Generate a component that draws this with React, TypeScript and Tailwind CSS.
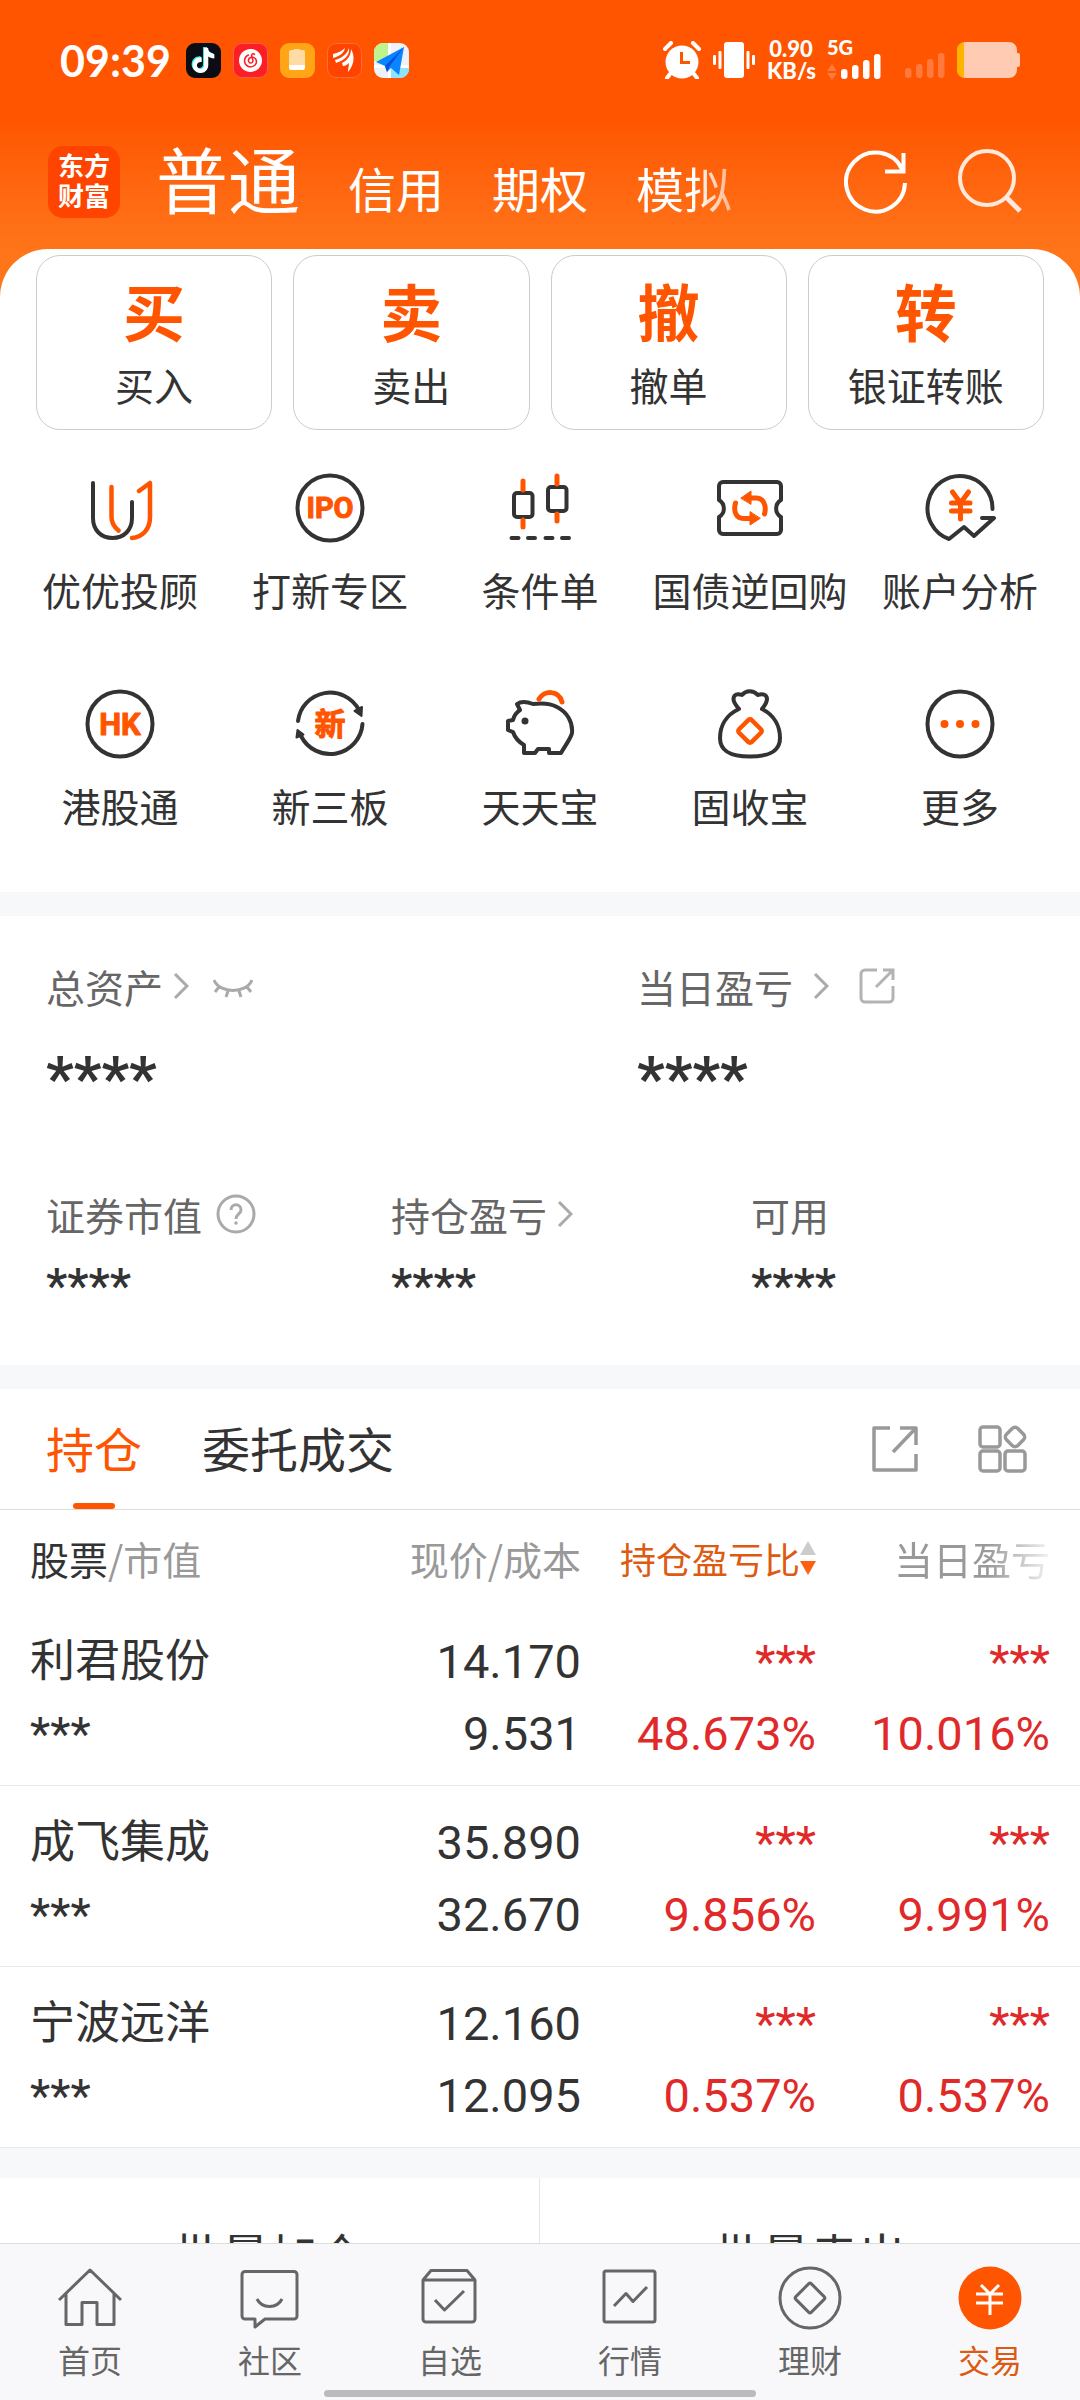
import type { ReactNode } from 'react';
import { SiNeteasecloudmusic, SiTiktok } from 'react-icons/si';

interface Entry {
  label: string;
  icon: ReactNode;
}

interface Holding {
  name: string;
  price: string;
  cost: string;
  totalRate: string;
  dayRate: string;
}

const DARK = '#333333';
const ORANGE = '#ff5500';

const actions = [
  { mark: '买', label: '买入' },
  { mark: '卖', label: '卖出' },
  { mark: '撤', label: '撤单' },
  { mark: '转', label: '银证转账' },
];

const holdings: Holding[] = [
  { name: '利君股份', price: '14.170', cost: '9.531', totalRate: '48.673%', dayRate: '10.016%' },
  { name: '成飞集成', price: '35.890', cost: '32.670', totalRate: '9.856%', dayRate: '9.991%' },
  { name: '宁波远洋', price: '12.160', cost: '12.095', totalRate: '0.537%', dayRate: '0.537%' },
];

function EntryIcon({ children }: { children: ReactNode }) {
  return (
    <svg viewBox="0 0 72 72" className="size-[72px]" fill="none" stroke={DARK} strokeWidth="4" strokeLinecap="round" strokeLinejoin="round" aria-hidden="true">
      {children}
    </svg>
  );
}

const entries: Entry[] = [
  {
    label: '优优投顾',
    icon: (
      <EntryIcon>
        <path d="M9 11v35c0 12 8 20 19.500 20S48 58 48 46V30" />
        <g stroke={ORANGE} strokeWidth="4.500">
          <path d="M27.500 15v30c0 6 2.500 10 7 13.500" />
          <path d="M55 19l11-8v34c0 12-7 20-18 21" />
        </g>
      </EntryIcon>
    ),
  },
  {
    label: '打新专区',
    icon: (
      <EntryIcon>
        <circle cx="36" cy="36" r="32.500" />
        <text x="36" y="46" textAnchor="middle" fontSize="29" stroke={ORANGE} strokeWidth="1" fill={ORANGE} className="font-['Roboto',sans-serif] font-bold">
          IPO
        </text>
      </EntryIcon>
    ),
  },
  {
    label: '条件单',
    icon: (
      <EntryIcon>
        <rect x="10" y="21" width="18.500" height="24" rx="3" />
        <rect x="44" y="15" width="18.500" height="24" rx="3" />
        <path d="M7.500 66h7M24 66h7M41.500 66h7M58 66h7" />
        <path d="M19 9v9M19 48v7M53 4v8M53 42v7" stroke={ORANGE} strokeWidth="5" />
      </EntryIcon>
    ),
  },
  {
    label: '国债逆回购',
    icon: (
      <EntryIcon>
        <path d="M9 10h54a4 4 0 0 1 4 4v14c-6.500 4-6.500 13 0 17v13a4 4 0 0 1-4 4H9a4 4 0 0 1-4-4V45c6.500-4 6.500-13 0-17V14a4 4 0 0 1 4-4z" />
        <g stroke={ORANGE} strokeWidth="5">
          <path d="M37 26h5c7 0 11 7 8.500 16" />
          <path d="M21.500 31c-2.500 9 1 15.500 8 15.500h6" />
        </g>
        <path d="M27 26l10-7v13zM46 46.500L36 53V40z" fill={ORANGE} stroke={ORANGE} strokeWidth="1" />
      </EntryIcon>
    ),
  },
  {
    label: '账户分析',
    icon: (
      <EntryIcon>
        <path d="M68.500 37A32.500 32.500 0 1 0 25 67l15-12 10 9 20-18H58" />
        <path d="M28.500 20l8 11 8-11M27.500 31H46M27.500 39H46M36.500 31v16" stroke={ORANGE} strokeWidth="5" />
      </EntryIcon>
    ),
  },
  {
    label: '港股通',
    icon: (
      <EntryIcon>
        <circle cx="36" cy="36" r="32.500" />
        <text x="36" y="47" textAnchor="middle" fontSize="31" stroke={ORANGE} strokeWidth="1" fill={ORANGE} className="font-['Roboto',sans-serif] font-bold">
          HK
        </text>
      </EntryIcon>
    ),
  },
  {
    label: '新三板',
    icon: (
      <EntryIcon>
        <path d="M4 33A32.500 32.500 0 0 1 65 22M68.500 36A32.500 32.500 0 0 1 7 48" />
        <path d="M60.500 23l7.500-4-.5 9zM3.500 42l6 4.500-7 3z" fill={DARK} strokeWidth="2" />
        <text x="36" y="47" textAnchor="middle" fontSize="31" stroke={ORANGE} strokeWidth="1" fill={ORANGE} className="font-['Noto_Sans_CJK_SC',sans-serif] font-bold">
          新
        </text>
      </EntryIcon>
    ),
  },
  {
    label: '天天宝',
    icon: (
      <EntryIcon>
        <path d="M16 22l-3-6c4-3 11-2 16 0 8-1 17-1 24 3 10 5 16 15 15 26-1 5-7 13-11 20H45v-4H34l-3 4H20v-8c-5-3-9-7-11-13l-5-2v-9l5-1c1-4 4-8 7-10z" />
        <circle cx="21" cy="33" r="3.500" fill={DARK} stroke="none" />
        <path d="M35 11c5-9 20-9 23 3" stroke={ORANGE} strokeWidth="5" />
      </EntryIcon>
    ),
  },
  {
    label: '固收宝',
    icon: (
      <EntryIcon>
        <path d="M25 21C12 27 6 38 6 50c0 13 10 18.500 30 18.500S66 63 66 50c0-12-6-23-18-29 3-4 5-6 5-10 0-4-4-6-9-4-5-5-12-5-16 0-5-2-8.500 0-8.500 4 0 4 2.500 6 5.500 10z" />
        <rect x="27" y="34" width="18" height="18" rx="2.500" transform="rotate(45 36 43)" stroke={ORANGE} strokeWidth="4.500" />
      </EntryIcon>
    ),
  },
  {
    label: '更多',
    icon: (
      <EntryIcon>
        <circle cx="36" cy="36" r="32.500" />
        <g fill={ORANGE} stroke="none">
          <circle cx="20.500" cy="36" r="4" />
          <circle cx="36" cy="36" r="4" />
          <circle cx="51.500" cy="36" r="4" />
        </g>
      </EntryIcon>
    ),
  },
];

function NavIcon({ children }: { children: ReactNode }) {
  return (
    <svg viewBox="0 0 64 64" className="size-16" fill="none" stroke="#666666" strokeWidth="3" strokeLinejoin="round" aria-hidden="true">
      {children}
    </svg>
  );
}

const navItems: Entry[] = [
  {
    label: '首页',
    icon: (
      <NavIcon>
        <path d="M1 34L32 4l31 30M8 28v30.500h16v-22h15v22h17V28" />
      </NavIcon>
    ),
  },
  {
    label: '社区',
    icon: (
      <NavIcon>
        <path d="M7 5.500h49a3 3 0 0 1 3 3V50a3 3 0 0 1-3 3H27l-10 8v-8H7a3 3 0 0 1-3-3V8.500a3 3 0 0 1 3-3z" />
        <path d="M19 33c5 10 20 10 25 0" />
      </NavIcon>
    ),
  },
  {
    label: '自选',
    icon: (
      <NavIcon>
        <path d="M5 14h52v39a3 3 0 0 1-3 3H8a3 3 0 0 1-3-3zl8-9.500h36l8 9.500M17 34l9.500 10L46 25" />
      </NavIcon>
    ),
  },
  {
    label: '行情',
    icon: (
      <NavIcon>
        <rect x="6" y="5" width="51" height="51" rx="2" />
        <path d="M16 40l12-12.500 7 8L49 21" />
      </NavIcon>
    ),
  },
  {
    label: '理财',
    icon: (
      <NavIcon>
        <circle cx="32" cy="32" r="30" />
        <rect x="21" y="21" width="22" height="22" rx="2" transform="rotate(45 32 32)" />
      </NavIcon>
    ),
  },
  {
    label: '交易',
    icon: (
      <NavIcon>
        <circle cx="32" cy="32" r="31.500" fill={ORANGE} stroke="none" />
        <path d="M23 19l9 9 9-9M18 28h27M18 37h27M32 28v21" stroke="#ffffff" />
      </NavIcon>
    ),
  },
];

function Chevron() {
  return (
    <svg viewBox="0 0 16 26" className="h-[26px] w-4" fill="none" stroke="#aaaaaa" strokeWidth="3" aria-hidden="true">
      <path d="M2 1l12 12L2 25" />
    </svg>
  );
}

function SignalBars({ className }: { className?: string }) {
  return (
    <svg viewBox="0 0 40 26" className={`h-[26px] w-10 ${className ?? ''}`} fill="currentColor" aria-hidden="true">
      <rect x="0" y="15" width="6.500" height="10" rx="3" />
      <rect x="11" y="11" width="6.500" height="14" rx="3" />
      <rect x="22" y="6" width="6.500" height="19" rx="3" />
      <rect x="33" y="0" width="6.500" height="25" rx="3" />
    </svg>
  );
}

function StatusBar() {
  return (
    <div className="flex h-[120px] items-center justify-between px-[60px]">
      <div className="flex items-center gap-3">
        <span className="mr-[3px] font-['Lato',sans-serif] text-[43px] leading-none font-bold">09:39</span>
        <span className="flex size-[35px] items-center justify-center rounded-[9px] bg-[#0b0c14]">
          <SiTiktok size={25} className="drop-shadow-[-1px_-1px_0_#25f4ee]" />
        </span>
        <span className="flex size-[35px] items-center justify-center rounded-[9px] border border-[#ff5a50] bg-[#fb1e24]">
          <SiNeteasecloudmusic size={23} />
        </span>
        <span className="flex size-[35px] items-center justify-center rounded-[9px] bg-[#ffa516]">
          <svg viewBox="0 0 16 22" className="h-[22px] w-4" aria-hidden="true">
            <path d="M0 3a2 2 0 0 1 2-2h3V0h6v1h3a2 2 0 0 1 2 2v13H0z" fill="#ffdca6" />
            <path d="M0 16h16v3a2 2 0 0 1-2 2H2a2 2 0 0 1-2-2z" fill="#ffffff" />
          </svg>
        </span>
        <span className="flex size-[35px] items-center justify-center rounded-[9px] border border-[#ff6c3a] bg-[#ff4400]">
          <svg viewBox="0 0 24 24" className="size-6" fill="#ffffff" aria-hidden="true">
            <path d="M1 6C6 5 10 3 13 0c-1 5-5 8-12 10zM3 12C10 10 15 6 17 0c1 7-4 12-13 15zM10 15c6-3 9-8 9-14 5 9 2 17-3 23 0-4 1-6 1-9-2 2-4 3-6 3z" />
          </svg>
        </span>
        <svg viewBox="0 0 35 35" className="size-[35px] rounded-[9px]" aria-hidden="true">
          <rect width="35" height="35" fill="#eef2f6" />
          <path d="M0 0h14v18H0z" fill="#c0f58e" />
          <path d="M17 25h18v10H17z" fill="#8ee4fb" />
          <path d="M14 0h3v35h-3zM0 22h35v3H0z" fill="#ffffff" />
          <path d="M30 4L2 19l9 4 2 6 4-4 8 7z" fill="#0a84ff" />
          <path d="M30 4L11 23l2 6 2-5z" fill="#0552d8" />
        </svg>
      </div>
      <div className="flex items-center gap-3">
        <svg viewBox="0 0 38 38" className="size-[38px]" aria-hidden="true">
          <circle cx="19" cy="21" r="16.500" fill="#ffffff" />
          <path d="M2 8l6-6M36 8l-6-6M7 33l-3 4M31 33l3 4" stroke="#ffffff" strokeWidth="4" strokeLinecap="round" />
          <path d="M18.500 11v10.500H27" fill="none" stroke={ORANGE} strokeWidth="3" />
        </svg>
        <svg viewBox="0 0 42 38" className="h-[38px] w-[42px]" fill="#ffffff" aria-hidden="true">
          <rect x="11" y="1" width="20" height="36" rx="3" />
          <rect x="5.500" y="10" width="3" height="18" rx="1" />
          <rect x="33.500" y="10" width="3" height="18" rx="1" />
          <rect x="0" y="14" width="3" height="10" rx="1" />
          <rect x="39" y="14" width="3" height="10" rx="1" />
        </svg>
        <div className="w-12 text-center font-['Lato',sans-serif] text-[22px] leading-[22px] font-black">
          <div>0.90</div>
          <div>KB/s</div>
        </div>
        <div className="flex w-[66px] flex-col">
          <span className="font-['Lato',sans-serif] text-[20px] leading-[14px] font-black">5G</span>
          <div className="flex items-end gap-1">
            <svg viewBox="0 0 10 16" className="h-4 w-[10px]" fill="#ff7a3c" aria-hidden="true">
              <path d="M5 0l5 7H0zM0 9h10l-5 7z" />
            </svg>
            <SignalBars />
          </div>
        </div>
        <SignalBars className="mt-3 text-[#ff7a3c]" />
        <svg viewBox="0 0 63 36" className="h-9 w-[63px]" aria-hidden="true">
          <path d="M9 0h43a8 8 0 0 1 8 8v3h1a2 2 0 0 1 2 2v10a2 2 0 0 1-2 2h-1v3a8 8 0 0 1-8 8H9a9 9 0 0 1-9-9V9a9 9 0 0 1 9-9z" fill="#ffccb3" />
          <path d="M7 0v36a8 8 0 0 1-7-9V9a8 8 0 0 1 7-9z" fill="#ffb400" />
        </svg>
      </div>
    </div>
  );
}

function Header() {
  return (
    <header className="bg-linear-to-b from-[#ff5500] from-40% to-[#ff751a] to-85% pb-[53px] text-white">
      <StatusBar />
      <div className="flex h-[124px] items-center pr-14 pl-12">
        <div className="mr-9 flex size-[72px] flex-col items-center justify-center rounded-[15px] bg-[#ff4400] pb-1 text-[26px] leading-[30px] font-bold">
          <span>东方</span>
          <span>财富</span>
        </div>
        <nav className="flex flex-1 items-baseline gap-12 text-[48px] leading-[72px]">
          <a href="#normal" className="text-[72px]">普通</a>
          <a href="#margin">信用</a>
          <a href="#options">期权</a>
          <a href="#demo" className="bg-linear-to-r from-white from-60% to-white/50 bg-clip-text text-transparent">模拟</a>
        </nav>
        <div className="flex items-center gap-12">
          <button type="button" aria-label="刷新">
            <svg viewBox="0 0 64 64" className="size-16" fill="none" stroke="#ffffff" strokeWidth="4" aria-hidden="true">
              <path d="M61 33A29.500 29.500 0 1 1 58 19M59.500 3v18.500H41" />
            </svg>
          </button>
          <button type="button" aria-label="搜索">
            <svg viewBox="0 0 68 68" className="size-[68px]" fill="none" stroke="#ffe8dc" strokeWidth="4" aria-hidden="true">
              <circle cx="31" cy="30" r="27" />
              <path d="M50 49l14 14" strokeWidth="5" />
            </svg>
          </button>
        </div>
      </div>
    </header>
  );
}

function QuickEntries() {
  return (
    <section className="-mt-12 rounded-t-[48px] bg-white pt-[6px] pb-[60px]">
      <div className="grid grid-cols-4 gap-[21px] px-9">
        {actions.map((item) => (
          <button key={item.label} type="button" className="flex h-[175px] flex-col items-center gap-[11px] rounded-3xl border border-[#cccccc] pt-[18px]">
            <span className="text-[62px] leading-[72px] font-bold text-[#ff5500]">{item.mark}</span>
            <span className="text-[39px] leading-[54px]">{item.label}</span>
          </button>
        ))}
      </div>
      <div className="mt-[42px] grid grid-cols-5 gap-y-[72px] px-[15px]">
        {entries.map((item) => (
          <button key={item.label} type="button" className="flex flex-col items-center gap-[18px] whitespace-nowrap">
            {item.icon}
            <span className="text-[39px] leading-[54px]">{item.label}</span>
          </button>
        ))}
      </div>
    </section>
  );
}

function AssetSummary() {
  return (
    <section className="mt-6 bg-white px-[46px] pt-[43px] pb-[52px] text-[39px] leading-[54px] text-[#666666]">
      <div className="grid grid-cols-[591fr_397fr]">
        <div>
          <div className="flex items-center">
            总资产
            <span className="ml-[10px]"><Chevron /></span>
            <button type="button" aria-label="显示金额" className="mt-1 ml-6">
              <svg viewBox="0 0 40 20" className="h-5 w-10" fill="none" stroke="#aaaaaa" strokeWidth="3" aria-hidden="true">
                <path d="M1 2c6 14 32 14 38 0M6 9l-4 5M34 9l4 5M15 13l-2 6M26 13l2 6" />
              </svg>
            </button>
          </div>
          <div className="mt-[30px] font-['Roboto',sans-serif] text-[61px] leading-[72px] font-bold text-[#333333]">****</div>
        </div>
        <div>
          <div className="flex items-center">
            当日盈亏
            <span className="ml-5"><Chevron /></span>
            <button type="button" aria-label="分享当日盈亏" className="ml-[30px]">
              <svg viewBox="0 0 36 36" className="size-9" fill="none" stroke="#b3b3b3" strokeWidth="3" aria-hidden="true">
                <path d="M18 2H6a4 4 0 0 0-4 4v24a4 4 0 0 0 4 4h24a4 4 0 0 0 4-4V18M24 2h10v10M33 3L17 19" />
              </svg>
            </button>
          </div>
          <div className="mt-[30px] font-['Roboto',sans-serif] text-[61px] leading-[72px] font-bold text-[#333333]">****</div>
        </div>
      </div>
      <div className="mt-[72px] grid grid-cols-[345fr_360fr_283fr]">
        <div>
          <div className="flex items-center">
            证券市值
            <button type="button" aria-label="证券市值说明" className="ml-[14px]">
              <svg viewBox="0 0 40 40" className="size-10" fill="none" stroke="#aaaaaa" strokeWidth="3" aria-hidden="true">
                <circle cx="20" cy="20" r="18" />
                <path d="M15 16c0-7 10-7 10 0 0 4-5 4-5 9" />
                <circle cx="20" cy="29" r="1" fill="#aaaaaa" strokeWidth="1.500" />
              </svg>
            </button>
          </div>
          <div className="mt-[18px] font-['Roboto',sans-serif] text-[48px] font-medium text-[#333333]">****</div>
        </div>
        <div>
          <div className="flex items-center">
            持仓盈亏
            <span className="ml-[10px]"><Chevron /></span>
          </div>
          <div className="mt-[18px] font-['Roboto',sans-serif] text-[48px] font-medium text-[#333333]">****</div>
        </div>
        <div>
          <div>可用</div>
          <div className="mt-[18px] font-['Roboto',sans-serif] text-[48px] font-medium text-[#333333]">****</div>
        </div>
      </div>
    </section>
  );
}

function HoldingsTable() {
  return (
    <table className="w-full table-fixed text-right">
      <thead className="text-[39px] leading-[54px] text-[#999999]">
        <tr className="h-[95px]">
          <th className="pl-[30px] text-left font-normal">
            <span className="text-[#333333]">股票</span>/市值
          </th>
          <th className="w-[220px] font-normal">现价/成本</th>
          <th className="w-[235px] font-normal">
            <button type="button" className="inline-flex items-center text-[36px] text-[#dd5a12]">
              持仓盈亏比
              <svg viewBox="0 0 16 34" className="h-[34px] w-4" aria-hidden="true">
                <path d="M8 0l8 14H0z" fill="#cccccc" />
                <path d="M8 34l8-14H0z" fill="#ff6010" />
              </svg>
            </button>
          </th>
          <th className="w-[264px] pr-[30px] font-normal">
            <span className="bg-linear-to-r from-[#999999] from-60% to-[#f2f2f2] bg-clip-text text-transparent">当日盈亏</span>
          </th>
        </tr>
      </thead>
      <tbody className="font-['Roboto','Noto_Sans_CJK_SC',sans-serif] text-[47px] leading-[72px]">
        {holdings.map((item) => (
          <tr key={item.name} className="border-b border-[#eaeaea]">
            <td className="pt-[21px] pb-[15px] pl-[30px] text-left">
              <div className="text-[45px]">{item.name}</div>
              <div>***</div>
            </td>
            <td className="pt-[21px] pb-[15px]">
              <div>{item.price}</div>
              <div>{item.cost}</div>
            </td>
            <td className="pt-[21px] pb-[15px] text-[#e02a2a]">
              <div>***</div>
              <div>{item.totalRate}</div>
            </td>
            <td className="pt-[21px] pr-[30px] pb-[15px] text-[#e02a2a]">
              <div>***</div>
              <div>{item.dayRate}</div>
            </td>
          </tr>
        ))}
      </tbody>
    </table>
  );
}

function Positions() {
  return (
    <section className="mt-6 bg-white">
      <div className="flex h-[121px] items-stretch border-b border-[#dddddd] pr-[53px] pl-[46px] text-[48px]">
        <button type="button" className="flex flex-col items-center text-[#ff5500]">
          <span className="flex flex-1 items-center pt-[2px]">持仓</span>
          <span className="h-[6px] w-[42px] rounded-full bg-[#ff5500]" />
        </button>
        <button type="button" className="ml-[60px] pb-1">委托成交</button>
        <div className="ml-auto flex items-center gap-[60px]">
          <button type="button" aria-label="分享持仓">
            <svg viewBox="0 0 46 46" className="size-[46px]" fill="none" stroke="#999999" strokeWidth="3.500" strokeLinejoin="round" aria-hidden="true">
              <path d="M18 2H2v42h42V28M28 2h16v17M43 3L21 26" />
            </svg>
          </button>
          <button type="button" aria-label="更多功能">
            <svg viewBox="0 0 49 48" className="h-12 w-[49px]" fill="none" stroke="#999999" strokeWidth="3.500" aria-hidden="true">
              <rect x="2" y="2" width="20" height="20" rx="3" />
              <rect x="2" y="26" width="20" height="20" rx="3" />
              <rect x="27" y="26" width="20" height="20" rx="3" />
              <rect x="29" y="4" width="16" height="16" rx="4" transform="rotate(45 37 12)" />
            </svg>
          </button>
        </div>
      </div>
      <HoldingsTable />
    </section>
  );
}

export default function App() {
  return (
    <div className="flex h-screen flex-col bg-[#f7f8fa] font-['Noto_Sans_CJK_SC',sans-serif] text-[#333333]">
      <main className="flex-1 overflow-y-auto [scrollbar-width:none]">
        <Header />
        <QuickEntries />
        <AssetSummary />
        <Positions />
        <div className="mt-[30px] grid grid-cols-2 divide-x divide-[#e5e5e5] bg-white text-[48px] leading-[66px]">
          <button type="button" className="py-[42px]">批量加仓</button>
          <button type="button" className="py-[42px]">批量卖出</button>
        </div>
      </main>
      <nav className="shrink-0 border-t border-[#dddddd] bg-[#f8f8fa] pt-[22px]">
        <div className="grid grid-cols-6 text-[32px] leading-[48px] text-[#666666]">
          {navItems.map((item) => (
            <a key={item.label} href="#tab" className="flex flex-col items-center gap-[5px] last:text-[#dd5a12]">
              {item.icon}
              {item.label}
            </a>
          ))}
        </div>
        <div className="mx-auto mt-[7px] mb-[3px] h-[7px] w-2/5 rounded-full bg-[#bbbbbb]" />
      </nav>
    </div>
  );
}
